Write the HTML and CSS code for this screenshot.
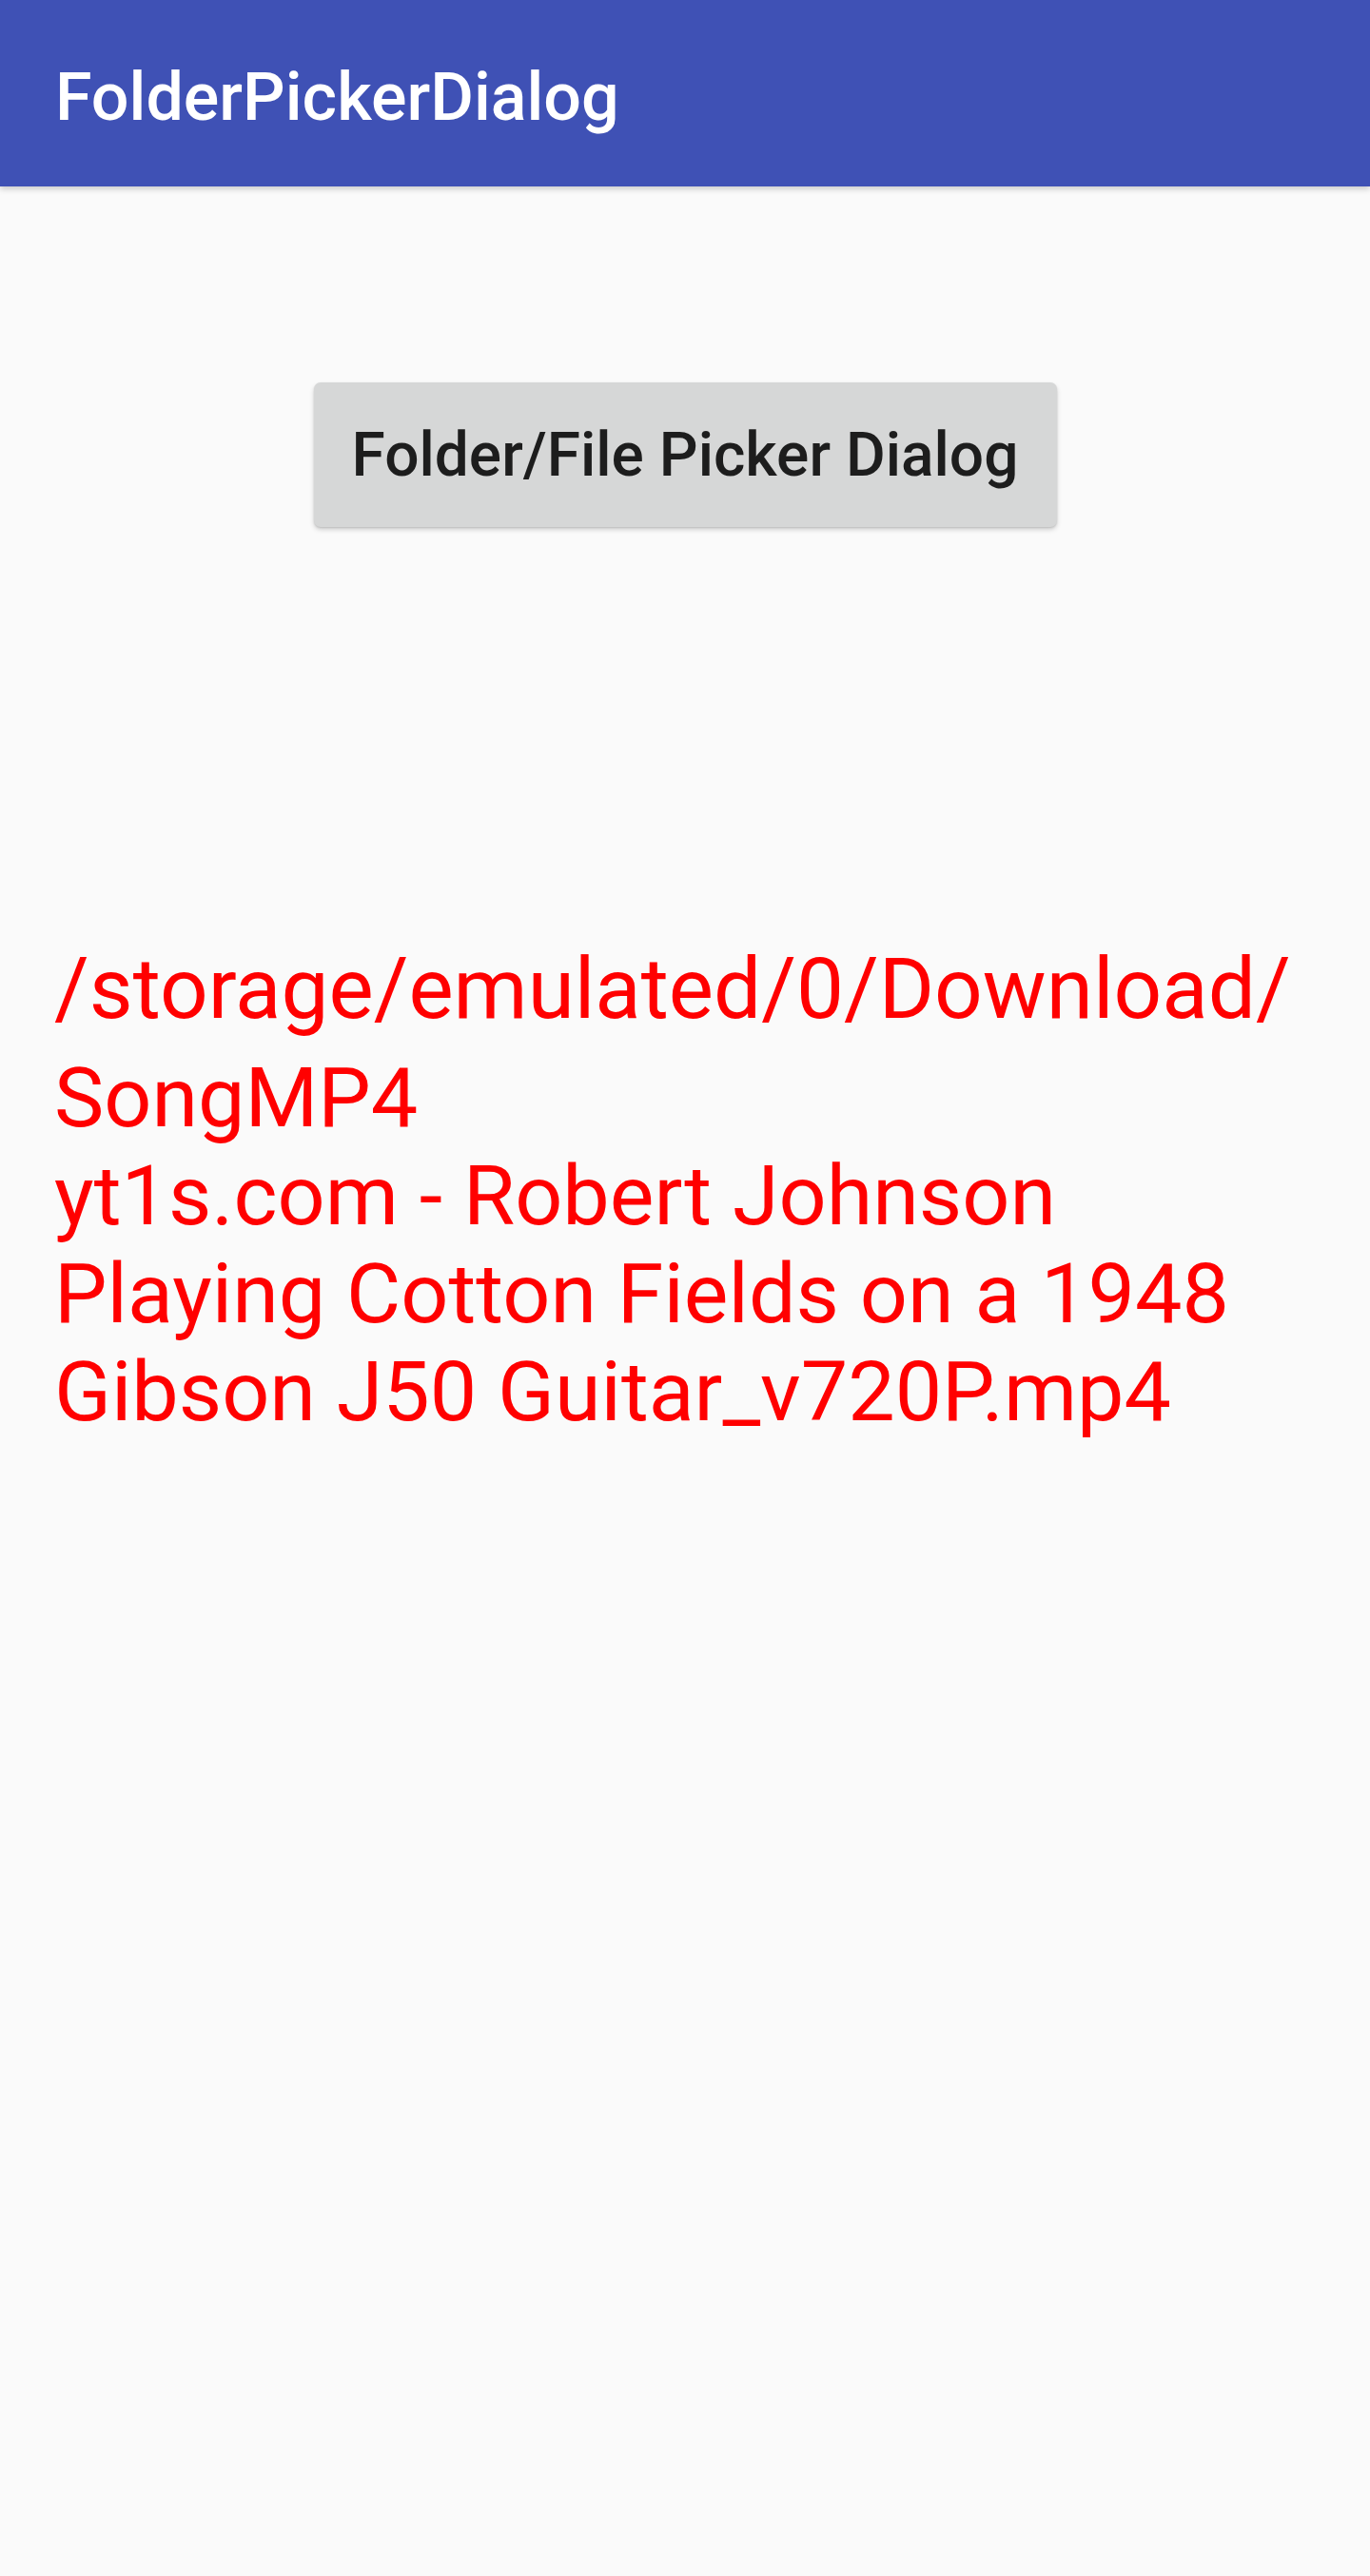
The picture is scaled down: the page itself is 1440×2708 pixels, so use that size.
FILE: index.html
```html
<!DOCTYPE html>
<html lang="en">
<head>
<meta charset="utf-8">
<title>FolderPickerDialog</title>
<link rel="stylesheet" href="styles.css">
</head>
<body>
<header class="appbar">
  <h1 class="appbar-title">FolderPickerDialog</h1>
</header>
<main class="content">
  <div class="button-row">
    <button class="picker-button" type="button">Folder/File Picker Dialog</button>
  </div>
  <div class="result">
    <div class="result-path">/storage/emulated/0/Download/</div>
    <div class="result-name">SongMP4<br>yt1s.com - Robert Johnson<br>Playing Cotton Fields on a 1948<br>Gibson J50 Guitar_v720P.mp4</div>
  </div>
</main>
</body>
</html>
```

FILE: styles.css
```css
html, body {
  margin: 0;
  padding: 0;
  background: #fafafa;
}

body {
  font-family: Roboto, "Liberation Sans", sans-serif;
  width: 1440px;
  min-height: 2708px;
}

.appbar {
  height: 196px;
  box-sizing: border-box;
  padding: 60px 0 0 58px;
  background: #3f51b5;
  box-shadow: 0 3px 6px rgba(0, 0, 0, 0.18);
  position: relative;
}

.appbar-title {
  margin: 0;
  font-size: 70px;
  font-weight: 500;
  line-height: 84px;
  color: #ffffff;
}

.content {
  display: flex;
  flex-direction: column;
}

.button-row {
  display: flex;
  justify-content: center;
  padding-top: 206px;
}

.picker-button {
  width: 781px;
  height: 152px;
  border: none;
  border-radius: 7px;
  background: #d6d7d7;
  box-shadow: 0 3px 5px rgba(0, 0, 0, 0.16), 0 1px 2px rgba(0, 0, 0, 0.12);
  font-family: Roboto, "Liberation Sans", sans-serif;
  font-size: 64px;
  font-weight: 500;
  color: #1d1d1d;
  padding: 0;
}

.result {
  padding: 0 40px 0 57px;
  margin-top: 434px;
  color: #f00;
  font-size: 88px;
  font-weight: 400;
  line-height: 103px;
}

.result-path {
  font-size: 89px;
  margin-bottom: 11px;
  white-space: nowrap;
}
```
